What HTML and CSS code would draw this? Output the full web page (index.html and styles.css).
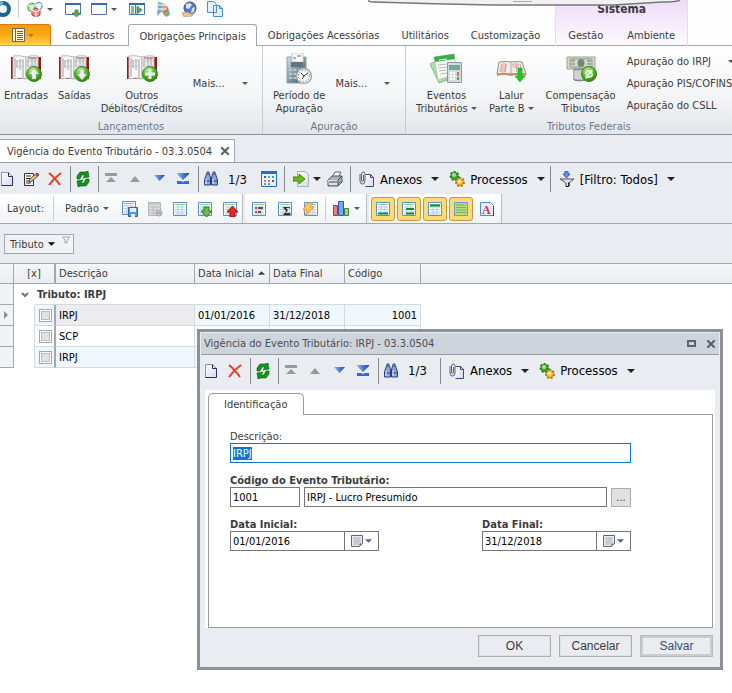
FILE: index.html
```html
<!DOCTYPE html>
<html lang="pt-BR">
<head>
  <meta charset="UTF-8">
  <title>Vigência do Evento Tributário</title>
  <link rel="stylesheet" href="styles.css">
</head>
<body>
  <!-- icon sprite -->
  <svg class="sprite" width="0" height="0">
    <defs>
      <linearGradient id="gBlue" x1="0" y1="0" x2="1" y2="0"><stop offset="0" stop-color="#8db4f5"/><stop offset="1" stop-color="#1a40b8"/></linearGradient>
      <linearGradient id="gPage" x1="0" y1="0" x2="1" y2="1"><stop offset="0" stop-color="#fff"/><stop offset="1" stop-color="#d3dbe9"/></linearGradient>
      <radialGradient id="gGreen" cx=".4" cy=".25" r=".8"><stop offset="0" stop-color="#c2efa0"/><stop offset=".5" stop-color="#55b72c"/><stop offset="1" stop-color="#237c0c"/></radialGradient>
      <linearGradient id="gCalc" x1="0" y1="0" x2="1" y2="1"><stop offset="0" stop-color="#c9e0ec"/><stop offset="1" stop-color="#3c4b58"/></linearGradient>
    </defs>
    <symbol id="new" viewBox="0 0 16 16"><path d="M2.500 1.500h7l4 4v9h-11z" fill="url(#gPage)" stroke="#8a94b4"/><path d="M9.500 1.500v4h4v9h-11" fill="none" stroke="#2c3058"/></symbol>
    <symbol id="edit" viewBox="0 0 16 16"><path d="M1.500 2.500h9v12h-9z" fill="#fff" stroke="#333"/><path d="M3 5h5M3 7.500h4M3 10h3M3 12h5" stroke="#222"/><path d="M6 11l1-3 7-6 2 2-7 6z" fill="#e8c38c" stroke="#6b4a38"/><path d="M13 3l2 2" stroke="#c33" stroke-width="2"/></symbol>
    <symbol id="delete" viewBox="0 0 16 16"><path d="M2 2q5 4 11 12M14 2Q7 7 2 14" fill="none" stroke="#ef3a1d" stroke-width="2"/></symbol>
    <symbol id="refresh" viewBox="0 0 16 16"><path d="M2 8V5l3-4h5l3-1 1 6-6 1 2-3H7L5 8z" fill="#12941d" stroke="#06600c" stroke-width=".6"/><path d="M14 8v3l-3 4H6l-3 1-1-6 6-1-2 3h3l2-4z" fill="#12941d" stroke="#06600c" stroke-width=".6"/></symbol>
    <symbol id="first" viewBox="0 0 16 16"><path d="M2 2h12v3H2zM8 6l5 5H3z" fill="#999"/></symbol>
    <symbol id="prev" viewBox="0 0 16 16"><path d="M8 5l5 6H3z" fill="#999"/></symbol>
    <symbol id="next" viewBox="0 0 16 16"><path d="M3 4h11L8.500 10z" fill="url(#gBlue)"/></symbol>
    <symbol id="last" viewBox="0 0 16 16"><path d="M2 2h12v1L8 9 2 3z" fill="url(#gBlue)"/><path d="M2 10h4l2 1 2-1h4v3H2z" fill="#3767cf"/></symbol>
    <symbol id="find" viewBox="0 0 16 16"><path d="M3.500 3h3l1 4v7h-6V9zM9.500 3h3l2 6v5h-6V7z" fill="#8fa6d6" stroke="#263f80"/><path d="M4 3V1h2v2M10 3V1h2v2M7 7h2M2 10h5M9 10h5" stroke="#263f80" fill="none"/><path d="M3 8v5M10 8v5" stroke="#eef4ff"/></symbol>
    <symbol id="calendar" viewBox="0 0 16 16"><path d="M.5.5h15v15H.5z" fill="#e8f2ff" stroke="#1f6fd6"/><path d="M0 0h16v3H0z" fill="#1f6fd6"/><path d="M3 5h2v2H3zM11 9h2v2h-2z" fill="#556"/><path d="M7 5h2v2H7zM3 9h2v2H3z" fill="#5aa5dd"/><path d="M11 5h2v2h-2zM7 12h2v2H7z" fill="#45b56f"/><path d="M7 9h2v2H7zM3 12h2v2H3z" fill="#e56a3c"/></symbol>
    <symbol id="export" viewBox="0 0 16 16"><path d="M4.500.5h8l3 3v12h-11z" fill="url(#gPage)" stroke="#aab2b8"/><path d="M0 6h6V3l6 5-6 5v-3H0z" fill="#6cb91a" stroke="#3e850a"/></symbol>
    <symbol id="print" viewBox="0 0 16 16"><path d="M5 6l3-5h6l-3 6z" fill="#fff" stroke="#667"/><path d="M1 9l4-4h10v6l-4 4H1z" fill="#aab4b9" stroke="#4f5c62"/><path d="M1 9h10v5H2z" fill="#dce3e5"/><path d="M2 11h8" stroke="#444"/><path d="M11 9l4-4M11 9v6" stroke="#445"/><path d="M12 11l2-2v2l-2 2z" fill="#3cc35c"/></symbol>
    <symbol id="clip" viewBox="0 0 16 16"><path d="M6.500 3.500h5l3 3v9h-8" fill="url(#gPage)" stroke="#50408a"/><path d="M11.500 3.500v3h3" fill="none" stroke="#50408a"/><path d="M1 3v7q0 3 2.500 3T6 10V3Q6 1 4.300 1T2.500 3v6q0 1.500 1 1.500T4.500 9V4" fill="none" stroke="#526675"/></symbol>
    <symbol id="gears" viewBox="0 0 16 16"><circle cx="5.500" cy="5" r="4" fill="#3da52e" stroke="#27812a" stroke-width="2" stroke-dasharray="2 1.500"/><circle cx="5" cy="4" r="2" fill="#a9e48b"/><circle cx="11" cy="11" r="4" fill="#f0b62c" stroke="#b9700f" stroke-width="2" stroke-dasharray="2 1.500"/><circle cx="10.500" cy="10.500" r="2" fill="#fde9a6"/></symbol>
    <symbol id="funnel" viewBox="0 0 16 16"><path d="M1 8h14l-5 4v3l-3 1v-4z" fill="#dce1e3" stroke="#555"/><path d="M9 12h1v3l-3 1" fill="none" stroke="#000"/><path d="M6 0h3v3h2L7.500 7 4 3h2z" fill="#5c93ee" stroke="#2f5fc6"/></symbol>
    <symbol id="sheet" viewBox="0 0 16 16"><path d="M1.500 1.500h13v13h-13z" fill="#fafdff" stroke="#5b8fd0"/><path d="M3 3.500h10" stroke="#9bc98c"/><path d="M3 6h10M3 8.500h10M3 11h10M3 13h10M6 5v9M10 5v9" stroke="#b6cde6"/></symbol>
    <symbol id="sheetSave" viewBox="0 0 16 16"><use href="#sheet" x="-1" y="-1"/><path d="M6.500 6.500h9v9h-9z" fill="#5b95dd" stroke="#2b65ae"/><path d="M8 7h6v4H8zM9 13h4v3H9z" fill="#e2efff"/></symbol>
    <symbol id="sheetOff" viewBox="0 0 16 16"><path d="M1.500 1.500h12v13h-12z" fill="#ddd" stroke="#b4b4b4"/><path d="M2 3h12M2 6h12M2 9h9M2 12h9M6 5v9" stroke="#bbb"/><circle cx="12" cy="12" r="3" fill="#ccc" stroke="#a5a5a5"/><path d="M10 12h4" stroke="#888"/></symbol>
    <symbol id="sheetDown" viewBox="0 0 16 16"><use href="#sheet"/><path d="M7 6h5v4h3l-5.500 6L4 10h3z" fill="#6dbd4a" stroke="#287d13"/></symbol>
    <symbol id="sheetUp" viewBox="0 0 16 16"><use href="#sheet"/><path d="M8 16h5v-5h3l-5.500-6L5 11h3z" fill="#df2921" stroke="#ad1111"/></symbol>
    <symbol id="sheetRows" viewBox="0 0 16 16"><use href="#sheet"/><path d="M4 7h2M4 11h2" stroke="#d11" stroke-width="1.500"/><path d="M7 7h5M7 11h3" stroke="#223" stroke-width="1.500"/></symbol>
    <symbol id="sheetFlash" viewBox="0 0 16 16"><use href="#sheet"/><path d="M4 2h6L7 6h4L2 15l2-6H0z" fill="#f8c95c" stroke="#dba045"/></symbol>
    <symbol id="chart" viewBox="0 0 16 16"><path d="M.5 4.500h4v10h-4z" fill="#f08080" stroke="#c02e2e"/><path d="M5.500.5h5v14h-5z" fill="#77a7ef" stroke="#2759ad"/><path d="M11.500 7.500h4v7h-4z" fill="#98d095" stroke="#3b863b"/></symbol>
    <symbol id="sheetFoot" viewBox="0 0 16 16"><use href="#sheet"/><path d="M3 12.500h10" stroke="#098f37" stroke-width="2"/></symbol>
    <symbol id="sheetGroup" viewBox="0 0 16 16"><use href="#sheet"/><path d="M5 8h8M5 12.500h8" stroke="#098f37" stroke-width="2"/></symbol>
    <symbol id="sheetHead" viewBox="0 0 16 16"><use href="#sheet"/><path d="M3 4.500h10" stroke="#098f37" stroke-width="2"/></symbol>
    <symbol id="sheetFull" viewBox="0 0 16 16"><path d="M1.500 1.500h13v13h-13z" fill="#b6d987" stroke="#6b9bd0"/><path d="M3 4h10M3 6.500h10M3 9h10M3 11.500h10" stroke="#7fb44c"/></symbol>
    <symbol id="page" viewBox="0 0 16 16"><path d="M1.500 1.500h10l3 3v10h-13z" fill="#e1f0fc" stroke="#5488bf"/><path d="M14.500 5v10" stroke="#1b4f7c"/></symbol>
    <symbol id="book" viewBox="0 0 32 28"><path d="M1 2h30v22H1z" fill="#9b1616"/><path d="M3 1q7-1 13 1v22q-6-2-13 0z" fill="#f8f8f8" stroke="#b9b9b9"/><path d="M16 2q6-2 12-1v22q-6-1-12 1z" fill="#f1f1f1" stroke="#b9b9b9"/><path d="M5 3v19M7 5v8M10 4v11M13 4v19M18 4v8M22 3v17M25 3v7" stroke="#9c9cab"/><path d="M5 6h8M5 11h8M18 6h9M18 11h9" stroke="#c1c1cb"/><path d="M18 3h9" stroke="#b84747"/></symbol>
    <symbol id="bookUp" viewBox="0 0 32 28"><use href="#book"/><circle cx="24" cy="19" r="7.500" fill="url(#gGreen)" stroke="#388a1b"/><path d="M24 13l5 6h-3v5h-4v-5h-3z" fill="#eee" stroke="#aaa" stroke-width=".5"/></symbol>
    <symbol id="bookDown" viewBox="0 0 32 28"><use href="#book"/><circle cx="24" cy="19" r="7.500" fill="url(#gGreen)" stroke="#388a1b"/><path d="M24 25l5-6h-3v-5h-4v5h-3z" fill="#eee" stroke="#aaa" stroke-width=".5"/></symbol>
    <symbol id="bookAdd" viewBox="0 0 32 28"><use href="#book"/><circle cx="24" cy="19" r="7.500" fill="url(#gGreen)" stroke="#388a1b"/><path d="M22.500 14h3v3.500H29v3h-3.500V24h-3v-3.500H19v-3h3.500z" fill="#eee"/></symbol>
    <symbol id="period" viewBox="0 0 32 32"><path d="M4 4h19v26H4z" fill="url(#gCalc)" stroke="#8aa2b0"/><path d="M9 0h11v9H9z" fill="#fafafa" stroke="#ccc"/><path d="M10 5h3M14 3h4" stroke="#667"/><path d="M8 9h12v5H8z" fill="#5e7681"/><path d="M6 17h15M6 21h15M6 25h15" stroke="#b9cad3" stroke-width="2" stroke-dasharray="3 1.500"/><circle cx="21" cy="23" r="7.500" fill="#f8f8f6" stroke="#aaa" stroke-width="1.500"/><path d="M18 20l3 3 4-3M19 26l2-3" fill="none" stroke="#333"/><circle cx="21" cy="23" r="5.500" fill="none" stroke="#555" stroke-dasharray="1 1.900"/></symbol>
    <symbol id="events" viewBox="0 0 32 32"><path d="M0 11l9-4 8 20-8 3z" fill="#a8dfa5" stroke="#7ec37d"/><path d="M4 4l20-3 3 20-19 6z" fill="#fafafa" stroke="#b9c8b9"/><path d="M4 4l20-3 1 5L5 9z" fill="#38ad48"/><path d="M9 7l8-1" stroke="#fff"/><path d="M8 12l9-1M8 15l9-1M9 18l7-1M10 21l7-1" stroke="#bbb"/><path d="M17.500 9.500h14v20h-14z" fill="#d5dadd" stroke="#8d999f"/><path d="M19 12h11v5H19z" fill="#6cac98"/><path d="M20 20h6M20 23h6M20 26h6" stroke="#fff" stroke-width="2" stroke-dasharray="2 1"/><path d="M28 19v4" stroke="#e06a53" stroke-width="2"/><path d="M28 24v3" stroke="#4aa563" stroke-width="2"/></symbol>
    <symbol id="lalur" viewBox="0 0 32 28"><path d="M4 7q6-1 12 0 5-1 11 0l4 12q-8-1-15 0-7-1-14 0z" fill="#f1eee9" stroke="#9d8a72"/><path d="M2 20q7-2 14 0 7-2 15 0" fill="none" stroke="#bb975e" stroke-width="2"/><path d="M16 7v12M7 10l-2 7M11 9l-1 8M21 9l1 8M25 9l2 8" stroke="#aaa"/><path d="M7 9h4v3H7zM18 9h5v3h-5zM7 14h3v3H7z" fill="none" stroke="#e79a9a"/><path d="M23 13h4v8h3l-5 6-5-6h3z" fill="#20cb1d" stroke="#148f15" stroke-width=".5"/></symbol>
    <symbol id="money" viewBox="0 0 32 28"><path d="M2 2h28v12H2z" fill="#dcd9ca" stroke="#9fa092"/><path d="M5 4h22v8H5z" fill="none" stroke="#899b85"/><ellipse cx="16" cy="8" rx="3.500" ry="4" fill="#6c8a77"/><path d="M6 6h4M6 9h4M22 6h4M22 9h4" stroke="#677"/><path d="M9 14h11v11q-6 2-11 0z" fill="#b9b9b9" stroke="#777"/><path d="M9 17h11M9 19h11M9 21h11M9 23h11" stroke="#eee"/><circle cx="24" cy="19" r="7.500" fill="url(#gGreen)" stroke="#388a1b"/><path d="M19.500 19q1-4.500 6-4l2-1v5h-5l1.500-2q-2 0-2.500 2zM28.500 19q-1 4.500-6 4l-2 1v-5h5L24 21q2 0 2.500-2z" fill="#dff5d0"/></symbol>
    <symbol id="cubes" viewBox="0 0 16 16"><path d="M1 4l4-2 4 2v5l-4 2-4-2z" fill="#bae6a8" stroke="#459e4c"/><path d="M8 3l4-2 3 2v4l-3 2-4-2z" fill="#d6edf7" stroke="#448db3"/><path d="M5 9l4-2 4 2v5l-4 2-4-2z" fill="#ef8c81" stroke="#ca3530"/><path d="M1 4l4 2 4-2M5 6v5M8 3l4 2 3-2M12 5v4M5 9l4 2 4-2M9 11v5" fill="none" stroke="#fff"/></symbol>
    <symbol id="window" viewBox="0 0 16 16"><path d="M.5 2.500h15v11H.5z" fill="#fbfcfe" stroke="#5274a5"/><path d="M0 2h16v2H0z" fill="#306ab8"/></symbol>
    <symbol id="windowDown" viewBox="0 0 16 16"><use href="#window"/><path d="M10 9h3v3h3l-4.500 4L7 12h3z" fill="#59a656" stroke="#38783a" stroke-width=".7"/></symbol>
    <symbol id="windowGo" viewBox="0 0 16 16"><use href="#window"/><path d="M2 5h3v8H2z" fill="#7cc482"/><path d="M6.500 4v9" stroke="#5274a5"/><path d="M8 5l5 4-5 4z" fill="#4fae59" stroke="#2b7c37" stroke-width=".7"/></symbol>
    <symbol id="palette" viewBox="0 0 16 16"><path d="M2 15L3 1l5 1-2 9z" fill="#64ade2"/><path d="M6 11l2-9 4 3-4 7z" fill="#f0a23d"/><path d="M8 12l4-7 2 4-5 5z" fill="#b862c4"/><path d="M9 14l5-5 1 5-4 2z" fill="#72bb50"/><path d="M3 4h8M2 8h10" stroke="#fff"/></symbol>
    <symbol id="globe" viewBox="0 0 16 16"><circle cx="9" cy="7" r="6" fill="#5279bf" stroke="#334f89"/><path d="M5 3l4-1 2 2-3 4-3-1zM11 7l3-1-1 5-3 1z" fill="#d8e4f1"/><path d="M1 12l5-1 5 2 4-3-4 5-8 1z" fill="#edc398" stroke="#a57e5b" stroke-width=".5"/></symbol>
    <symbol id="copy" viewBox="0 0 16 16"><path d="M.5.5h6l3 3v8h-9zM6.500 4.500h6l3 3v8h-9z" fill="#e4f0fd" stroke="#4c8bd0"/><path d="M12.500 4.500v3h3" fill="none" stroke="#4c8bd0"/></symbol>
    <symbol id="caret" viewBox="0 0 8 4"><path d="M0 0h8L4 4z" fill="currentColor"/></symbol>
    <symbol id="close" viewBox="0 0 8 8"><path d="M0 0l8 8M8 0L0 8" stroke="currentColor" stroke-width="2"/></symbol>
    <symbol id="notes" viewBox="0 0 12 12"><path d="M.5.5h11v8l-3 3h-8z" fill="#e9edf2" stroke="#6d6260"/><path d="M2 3h8M2 5h8M2 7h8M2 9h6M4 2v8M6 2v8M8 2v8" stroke="#b6bfce"/><path d="M9 11V9h2" fill="#aaa" stroke="#6d6260"/></symbol>
  </svg>

  <!-- ribbon -->
  <header class="ribbon-top">
    <div class="ribbon-left">
      <div class="quick">
        <svg class="logo" viewBox="0 0 16 16"><circle cx="8" cy="8" r="6" fill="#f3f9fc" stroke="#1a688c" stroke-width="4"/><path d="M2 8a6 6 0 0 1 6-6" fill="none" stroke="#6fb8d4" stroke-width="3"/></svg>
        <span class="line"></span>
        <button class="q-drop" aria-label="Módulos"><svg class="icon"><use href="#cubes"/></svg><svg class="caret"><use href="#caret"/></svg></button>
        <button aria-label="Abrir janela"><svg class="icon"><use href="#windowDown"/></svg></button>
        <button class="q-drop" aria-label="Janelas"><svg class="icon"><use href="#window"/></svg><svg class="caret"><use href="#caret"/></svg></button>
        <button aria-label="Avançar"><svg class="icon"><use href="#windowGo"/></svg></button>
        <button aria-label="Cores"><svg class="icon"><use href="#palette"/></svg></button>
        <button aria-label="Internet"><svg class="icon"><use href="#globe"/></svg></button>
        <button aria-label="Copiar"><svg class="icon"><use href="#copy"/></svg></button>
      </div>
      <nav class="tabs">
        <button class="app-button" aria-label="Menu">
          <svg class="app-icon" viewBox="0 0 13 14"><path d="M.5.5h12v13H.5z" fill="#fff3c8" stroke="#6b6558"/><path d="M3.500 1v13M5 3.500h6M5 5.500h6M5 7.500h6M5 9.500h6M5 11.500h6" stroke="#6b6558"/></svg>
          <svg class="caret"><use href="#caret"/></svg>
        </button>
        <button class="tab">Cadastros</button>
        <button class="tab active">Obrigações Principais</button>
        <button class="tab">Obrigações Acessórias</button>
        <button class="tab">Utilitários</button>
        <button class="tab">Customização</button>
      </nav>
    </div>
    <div class="context">
      <div class="context-title">Sistema</div>
      <nav class="tabs">
        <button class="tab">Gestão</button>
        <button class="tab">Ambiente</button>
      </nav>
    </div>
    <div class="handle"><svg viewBox="0 0 312 7" preserveAspectRatio="none"><path d="M0 0q0 2 6 2 60 2 120 3h120l48-3q16 0 18-2z" fill="#f1f1f1"/><path d="M0 0q0 2 6 2 60 2 120 3h120l48-3q16 0 18-2" fill="none" stroke="#777" stroke-width="1.500"/><path d="M145 1.500h19" stroke="#aaa"/></svg></div>
  </header>

  <div class="ribbon">
    <section class="group g-entries">
      <div class="items">
        <button class="big"><svg><use href="#bookUp"/></svg>Entradas</button>
        <button class="big"><svg><use href="#bookDown"/></svg>Saídas</button>
        <button class="big"><svg><use href="#bookAdd"/></svg>Outros<br>Débitos/Créditos</button>
        <button class="more">Mais... <svg class="caret"><use href="#caret"/></svg></button>
      </div>
      <div class="caption">Lançamentos</div>
    </section>
    <section class="group g-closing">
      <div class="items">
        <button class="big"><svg><use href="#period"/></svg>Período de<br>Apuração</button>
        <button class="more">Mais... <svg class="caret"><use href="#caret"/></svg></button>
      </div>
      <div class="caption">Apuração</div>
    </section>
    <section class="group g-taxes">
      <div class="items">
        <button class="big"><svg><use href="#events"/></svg>Eventos<br>Tributários <svg class="caret"><use href="#caret"/></svg></button>
        <button class="big"><svg><use href="#lalur"/></svg>Lalur<br>Parte B <svg class="caret"><use href="#caret"/></svg></button>
        <button class="big"><svg><use href="#money"/></svg>Compensação<br>Tributos</button>
        <div class="stack">
          <button>Apuração do IRPJ <svg class="caret"><use href="#caret"/></svg></button>
          <button>Apuração PIS/COFINS</button>
          <button>Apuração do CSLL <svg class="caret"><use href="#caret"/></svg></button>
        </div>
      </div>
      <div class="caption">Tributos Federais</div>
    </section>
  </div>

  <div class="doc-tabs">
    <div class="doc-tab">Vigência do Evento Tributário - 03.3.0504 <button aria-label="Fechar"><svg><use href="#close"/></svg></button></div>
  </div>

  <div class="toolbar main-toolbar">
    <button class="tool" aria-label="Novo"><svg class="icon"><use href="#new"/></svg></button>
    <button class="tool" aria-label="Editar"><svg class="icon"><use href="#edit"/></svg></button>
    <button class="tool" aria-label="Excluir"><svg class="icon"><use href="#delete"/></svg></button>
    <span class="sep"></span>
    <button class="tool" aria-label="Atualizar"><svg class="icon"><use href="#refresh"/></svg></button>
    <span class="sep"></span>
    <button class="tool" aria-label="Primeiro"><svg class="icon"><use href="#first"/></svg></button>
    <button class="tool" aria-label="Anterior"><svg class="icon"><use href="#prev"/></svg></button>
    <button class="tool" aria-label="Próximo"><svg class="icon"><use href="#next"/></svg></button>
    <button class="tool" aria-label="Último"><svg class="icon"><use href="#last"/></svg></button>
    <span class="sep"></span>
    <button class="tool" aria-label="Localizar"><svg class="icon"><use href="#find"/></svg></button>
    <span class="count">1/3</span>
    <button class="tool" aria-label="Calendário"><svg class="icon"><use href="#calendar"/></svg></button>
    <span class="sep"></span>
    <button class="text-tool" aria-label="Exportar"><svg class="icon"><use href="#export"/></svg><svg class="caret"><use href="#caret"/></svg></button>
    <button class="tool" aria-label="Imprimir"><svg class="icon"><use href="#print"/></svg></button>
    <span class="sep"></span>
    <button class="text-tool"><svg class="icon"><use href="#clip"/></svg><span>Anexos</span><svg class="caret"><use href="#caret"/></svg></button>
    <button class="text-tool"><svg class="icon"><use href="#gears"/></svg><span>Processos</span><svg class="caret"><use href="#caret"/></svg></button>
    <span class="sep"></span>
    <button class="text-tool"><svg class="icon"><use href="#funnel"/></svg><span>[Filtro: Todos]</span><svg class="caret"><use href="#caret"/></svg></button>
  </div>

  <div class="layout-bar">
    <div class="band">
      <span class="layout-label">Layout:</span>
      <button class="layout-select">Padrão <svg class="caret"><use href="#caret"/></svg></button>
      <button class="tool" aria-label="Salvar layout"><svg class="icon"><use href="#sheetSave"/></svg></button>
      <button class="tool" aria-label="Excluir layout" disabled><svg class="icon"><use href="#sheetOff"/></svg></button>
      <button class="tool" aria-label="Colunas"><svg class="icon"><use href="#sheet"/></svg></button>
      <button class="tool" aria-label="Importar layout"><svg class="icon"><use href="#sheetDown"/></svg></button>
      <button class="tool" aria-label="Exportar layout"><svg class="icon"><use href="#sheetUp"/></svg></button>
    </div>
    <div class="band wide">
      <button class="tool" aria-label="Formatação"><svg class="icon"><use href="#sheetRows"/></svg></button>
      <button class="tool" aria-label="Totais"><svg class="icon"><use href="#sheet"/><text x="6" y="14" class="glyph-sum">Σ</text></svg></button>
      <button class="tool" aria-label="Ajuste rápido"><svg class="icon"><use href="#sheetFlash"/></svg></button>
      <button class="chart-tool" aria-label="Gráfico"><svg class="icon"><use href="#chart"/></svg><svg class="caret"><use href="#caret"/></svg></button>
    </div>
    <div class="band wide">
      <button class="tool on" aria-label="Rodapé"><svg class="icon"><use href="#sheetFoot"/></svg></button>
      <button class="tool on" aria-label="Rodapé do grupo"><svg class="icon"><use href="#sheetGroup"/></svg></button>
      <button class="tool on" aria-label="Painel de grupo"><svg class="icon"><use href="#sheetHead"/></svg></button>
      <button class="tool on" aria-label="Linhas alternadas"><svg class="icon"><use href="#sheetFull"/></svg></button>
      <button class="tool" aria-label="Fonte"><svg class="icon"><use href="#page"/><text x="3" y="13" class="glyph-a">A</text></svg></button>
    </div>
  </div>

  <div class="group-panel">
    <button class="group-field">Tributo <svg class="caret"><use href="#caret"/></svg><svg class="pin" viewBox="0 0 8 8"><path d="M.5 1h7L5 4v3H3V4z" fill="#fff" stroke="#9da5af"/></svg></button>
  </div>

  <table class="grid">
    <colgroup>
      <col class="c-ind"><col class="c-box"><col class="c-box"><col class="c-desc">
      <col class="c-date"><col class="c-date"><col class="c-code"><col>
    </colgroup>
    <thead>
      <tr>
        <th></th>
        <th colspan="2" class="mark">[x]</th>
        <th>Descrição</th>
        <th>Data Inicial <svg class="sort"><use href="#caret"/></svg></th>
        <th>Data Final</th>
        <th>Código</th>
        <th></th>
      </tr>
    </thead>
    <tbody>
      <tr class="group-row">
        <td class="ind"></td>
        <td colspan="7"><svg class="chevron" viewBox="0 0 8 6"><path d="M1 1l3 3 3-3" fill="none" stroke="#777" stroke-width="2"/></svg>Tributo: IRPJ</td>
      </tr>
      <tr class="odd">
        <td class="ind"><svg viewBox="0 0 4 8"><path d="M0 0l4 4-4 4z" fill="#8a9099"/></svg></td>
        <td></td>
        <td class="check"><input type="checkbox" aria-label="Selecionar IRPJ 1"></td>
        <td class="focus">IRPJ</td>
        <td>01/01/2016</td>
        <td>31/12/2018</td>
        <td class="num">1001</td>
        <td></td>
      </tr>
      <tr>
        <td class="ind"></td>
        <td></td>
        <td class="check"><input type="checkbox" aria-label="Selecionar SCP"></td>
        <td>SCP</td>
        <td></td>
        <td></td>
        <td></td>
        <td></td>
      </tr>
      <tr class="odd">
        <td class="ind"></td>
        <td></td>
        <td class="check"><input type="checkbox" aria-label="Selecionar IRPJ 2"></td>
        <td>IRPJ</td>
        <td></td>
        <td></td>
        <td></td>
        <td></td>
      </tr>
    </tbody>
  </table>

  <!-- floating record window -->
  <div class="dialog" role="dialog" aria-labelledby="dialogTitle">
    <div class="dialog-title">
      <span id="dialogTitle">Vigência do Evento Tributário: IRPJ - 03.3.0504</span>
      <button class="maximize" aria-label="Maximizar"></button>
      <button aria-label="Fechar"><svg><use href="#close"/></svg></button>
    </div>
    <div class="toolbar dialog-toolbar">
      <button class="tool" aria-label="Novo"><svg class="icon"><use href="#new"/></svg></button>
      <button class="tool" aria-label="Excluir"><svg class="icon"><use href="#delete"/></svg></button>
      <span class="sep"></span>
      <button class="tool" aria-label="Atualizar"><svg class="icon"><use href="#refresh"/></svg></button>
      <span class="sep"></span>
      <button class="tool" aria-label="Primeiro"><svg class="icon"><use href="#first"/></svg></button>
      <button class="tool" aria-label="Anterior"><svg class="icon"><use href="#prev"/></svg></button>
      <button class="tool" aria-label="Próximo"><svg class="icon"><use href="#next"/></svg></button>
      <button class="tool" aria-label="Último"><svg class="icon"><use href="#last"/></svg></button>
      <span class="sep"></span>
      <button class="tool" aria-label="Localizar"><svg class="icon"><use href="#find"/></svg></button>
      <span class="count">1/3</span>
      <span class="sep"></span>
      <button class="text-tool"><svg class="icon"><use href="#clip"/></svg><span>Anexos</span><svg class="caret"><use href="#caret"/></svg></button>
      <button class="text-tool"><svg class="icon"><use href="#gears"/></svg><span>Processos</span><svg class="caret"><use href="#caret"/></svg></button>
    </div>
    <div class="dialog-body">
      <button class="page-tab">Identificação</button>
      <form class="page">
        <div class="field">
          <label for="descricao" class="optional">Descrição:</label>
          <div class="desc-box"><input type="text" id="descricao" value="IRPJ"></div>
        </div>
        <div class="field">
          <label for="codigo">Código do Evento Tributário:</label>
          <div class="lookup">
            <input type="text" id="codigo" class="code" value="1001">
            <input type="text" aria-label="Evento" value="IRPJ - Lucro Presumido">
            <button type="button" class="browse">...</button>
          </div>
        </div>
        <div class="dates">
          <div class="field">
            <label for="dataInicial">Data Inicial:</label>
            <div class="date"><input type="text" id="dataInicial" value="01/01/2016"><button type="button" aria-label="Abrir calendário"><svg class="notes"><use href="#notes"/></svg><svg class="caret"><use href="#caret"/></svg></button></div>
          </div>
          <div class="field">
            <label for="dataFinal">Data Final:</label>
            <div class="date"><input type="text" id="dataFinal" value="31/12/2018"><button type="button" aria-label="Abrir calendário"><svg class="notes"><use href="#notes"/></svg><svg class="caret"><use href="#caret"/></svg></button></div>
          </div>
        </div>
      </form>
    </div>
    <div class="dialog-actions">
      <button>OK</button>
      <button>Cancelar</button>
      <button class="primary">Salvar</button>
    </div>
  </div>

  <script>
    // the description is edited first, with its value selected
    const descricao = document.getElementById("descricao");
    descricao.focus();
    descricao.select();
  </script>
</body>
</html>
```
FILE: styles.css
```css
:root {
  --bar: #e9ecf1;
  --line: #a2a8b3;
  --text: #3b3b3b;
}

* {
  box-sizing: border-box;
}

body {
  margin: 0;
  min-height: 100vh;
  overflow: hidden;
  position: relative;
  background: #fff;
  color: var(--text);
  font: 11px/13px "DejaVu Sans Condensed", "DejaVu Sans", sans-serif;
}

button,
input {
  font: inherit;
  color: inherit;
}

button {
  padding: 0;
  border: 0;
  background: none;
  white-space: nowrap;
}

svg {
  flex: none;
}

.sprite {
  position: absolute;
}

.icon {
  width: 16px;
  height: 16px;
  display: block;
}

.caret {
  width: 6px;
  height: 3px;
  color: #555;
}

.glyph-sum {
  font: bold 12px "Liberation Serif", serif;
  fill: #222;
}

.glyph-a {
  font: bold 12px "Liberation Serif", serif;
  fill: #d63131;
}

/* ribbon tabs */
.ribbon-top {
  position: relative;
  display: flex;
  gap: 4px;
  height: 46px;
  overflow: hidden;
  background: #fdfdfd;
  box-shadow: inset 0 -1px var(--line);
}

.ribbon-left {
  flex: none;
}

.quick {
  height: 24px;
  display: flex;
  align-items: center;
  padding-bottom: 6px;
}

.quick button {
  display: flex;
  align-items: center;
  gap: 4px;
  margin-right: 10px;
}

.quick .q-drop {
  margin-right: 12px;
}

.logo {
  width: 16px;
  height: 16px;
  margin-left: -5px;
}

.line {
  width: 1px;
  height: 18px;
  background: #c5c8cc;
  margin: 0 8px 0 7px;
}

.tabs {
  display: flex;
  height: 22px;
}

.tab {
  padding: 2px 11px 0;
  border-bottom: 1px solid var(--line);
}

.tab.active {
  margin-left: 3px;
  padding: 1px 10px 0;
  border: 1px solid var(--line);
  border-bottom: 0;
  border-radius: 3px 3px 0 0;
  background: #fff;
}

.app-button {
  width: 51px;
  margin-right: 3px;
  display: flex;
  align-items: center;
  justify-content: center;
  gap: 3px;
  padding-right: 4px;
  border: 1px solid #d97a10;
  border-left: 0;
  border-bottom-color: var(--line);
  border-radius: 0 3px 0 0;
  background: linear-gradient(#f29a13, #fba90f 50%, #ffd34f);
}

.app-icon {
  width: 13px;
  height: 14px;
}

.app-button .caret {
  color: #a3783d;
}

.context {
  flex: none;
  border: 1px solid #ead9f3;
  border-width: 0 1px;
  background: linear-gradient(#efdcf9, #fdfbfe);
}

.context .tab {
  padding: 2px 12px 0;
}

.context-title {
  height: 24px;
  padding-top: 3px;
  text-align: center;
  font-size: 12px;
  font-weight: bold;
}

.handle {
  position: absolute;
  top: 0;
  left: 368px;
}

.handle svg {
  display: block;
  width: 312px;
  height: 7px;
}

/* ribbon groups */
.ribbon {
  display: flex;
  height: 89px;
  overflow: hidden;
  border-bottom: 1px solid #8b9097;
  background: linear-gradient(#fff, #f2f4f6 60%, #e2e6eb);
}

.group {
  flex: none;
  display: flex;
  flex-direction: column;
  border-right: 1px solid #c9cdd3;
}

.g-entries {
  width: 263px;
}

.g-closing {
  width: 143px;
}

.g-taxes {
  flex: 1 0 364px;
}

.items {
  display: flex;
  gap: 2px;
  height: 74px;
}

.g-closing .items {
  padding-left: 6px;
}

.g-taxes .items {
  gap: 4px;
  padding-left: 6px;
}

.big {
  flex: none;
  padding: 7px 4px 0;
  text-align: center;
  display: block;
  line-height: 13px;
  align-self: flex-start;
}

.big > svg:first-child {
  display: block;
  width: 32px;
  height: 32px;
  margin: 0 auto 4px;
}

.big .caret,
.stack .caret {
  vertical-align: 2px;
}

.more {
  display: flex;
  align-items: center;
  gap: 17px;
  align-self: flex-start;
  height: 74px;
  padding-left: 4px;
}

.stack button {
  display: flex;
  align-items: center;
  gap: 17px;
  height: 22px;
}

.stack {
  padding: 4px 0 0 3px;
}

.caption {
  text-align: center;
  color: #707889;
}

.g-taxes .caption {
  text-align: left;
  padding-left: 141px;
}

/* document tab */
.doc-tabs {
  height: 28px;
  padding-top: 4px;
  background: var(--bar);
  border-bottom: 1px solid #989da8;
}

.doc-tab {
  display: inline-flex;
  align-items: center;
  gap: 9px;
  height: 23px;
  padding: 0 5px 0 7px;
  border: 1px solid var(--line);
  border-width: 1px 1px 0 0;
  background: #fff;
}

.doc-tab svg,
.dialog-title svg {
  display: block;
  width: 8px;
  height: 8px;
  color: #5a5e66;
}

/* toolbars */
.toolbar {
  display: flex;
  align-items: center;
  height: 31px;
  overflow: hidden;
  background: var(--bar);
  color: #000;
  font-size: 13px;
}

.main-toolbar {
  padding-top: 1px;
}

.main-toolbar > :first-child {
  margin-left: -5px;
}

.dialog-toolbar > :first-child {
  margin-left: -2px;
}

.tool {
  flex: none;
  width: 24px;
  height: 24px;
  display: flex;
  align-items: center;
  justify-content: center;
}

.sep {
  flex: none;
  width: 1px;
  height: 26px;
  margin-left: 3px;
  background: #85888e;
}

.count {
  width: 34px;
  padding-left: 5px;
}

.text-tool {
  display: flex;
  align-items: center;
  height: 24px;
  padding: 0 2px 0 8px;
}

.text-tool span {
  padding: 0 5px;
}

.toolbar .caret {
  width: 8px;
  height: 4px;
  margin-left: 4px;
  color: #222;
}

/* layout toolbar */
.layout-bar {
  display: flex;
  gap: 2px;
  height: 30px;
  background: var(--bar);
  border-bottom: 1px solid var(--line);
}

.band {
  display: flex;
  align-items: center;
  gap: 1px;
  background: linear-gradient(#fff, #f0f2f5);
  border-right: 1px solid #b7bcc5;
}

.band.wide {
  gap: 2px;
  padding: 0 2px;
}

.layout-label {
  padding: 6px 9px 6px 7px;
  border-right: 1px solid #ccd0d5;
}

.layout-select {
  display: flex;
  align-items: center;
  gap: 4px;
  padding: 0 8px 0 10px;
}

.chart-tool {
  display: flex;
  align-items: center;
  gap: 5px;
  height: 24px;
  padding: 0 4px 0 7px;
  border-left: 1px solid #ccd0d5;
}

.tool.on {
  border: 1px solid #c19a43;
  border-radius: 3px;
  background: #ffdb77;
}

/* grouping field */
.group-panel {
  height: 39px;
  padding: 10px 4px;
  background: var(--bar);
}

.group-field {
  display: flex;
  align-items: center;
  gap: 4px;
  height: 20px;
  padding: 0 3px 0 5px;
  border: 1px solid var(--line);
  background: #f1f3f6;
}

.group-field .caret {
  width: 7px;
  height: 4px;
  color: #000;
}

.pin {
  width: 8px;
  height: 8px;
  margin: -8px 0 0 3px;
}

/* grid */
.grid {
  width: 100%;
  table-layout: fixed;
  border-collapse: separate;
  border-spacing: 0;
  color: #000;
}

.c-ind {
  width: 14px;
}

.c-box {
  width: 21px;
}

.c-desc {
  width: 139px;
}

.c-date {
  width: 75px;
}

.c-code {
  width: 76px;
}

.grid th {
  height: 21px;
  padding: 0 3px;
  text-align: left;
  font-weight: normal;
  white-space: nowrap;
  color: var(--text);
  border: 1px solid var(--line);
  border-width: 1px 1px 1px 0;
  background: linear-gradient(#f6f7f9, #eaedf1);
}

.grid th:last-child {
  border-right: 0;
}

.grid .mark {
  text-align: center;
  border-right-width: 2px;
}

.sort {
  width: 7px;
  height: 4px;
  margin-left: 1px;
  vertical-align: 2px;
  transform: rotate(180deg);
}

.grid td {
  height: 21px;
  padding: 0 3px;
  border: 1px solid #d5dae2;
  border-width: 0 1px 1px 0;
}

.grid td:last-child,
.grid .ind + td {
  border: 0;
  background: #fff;
}

.grid .ind + td {
  border-right: 1px solid #d5dae2;
}

.grid .ind {
  padding: 0 4px;
  border-color: var(--line);
  background: #f1f3f6;
}

.ind svg {
  display: block;
  width: 4px;
  height: 8px;
}

.grid .group-row td + td {
  font-weight: bold;
  color: var(--text);
  padding-left: 7px;
  border: 0;
}

.group-row + tr .check,
.group-row + tr .check ~ td:not(:last-child) {
  box-shadow: 0 -1px #d5dae2;
}

.chevron {
  width: 8px;
  height: 6px;
  margin-right: 8px;
}

.odd td {
  background: #eff7ff;
}

.odd .focus {
  background: #ececee;
}

.grid .check {
  padding: 0 4px;
  border-right: 2px solid var(--line);
}

.check input {
  appearance: none;
  display: block;
  width: 13px;
  height: 13px;
  margin: 0;
  border: 1px solid #a1a8b2;
  background: #e2e2e2;
  box-shadow: inset 0 0 0 1px #fff, inset 0 0 0 2px #bbb;
}

.num {
  text-align: right;
}

/* record window */
.dialog {
  position: absolute;
  left: 197px;
  top: 329px;
  width: 526px;
  border: 3px solid #8c9198;
  padding: 1px;
  background: var(--bar);
}

.dialog-title {
  display: flex;
  align-items: center;
  gap: 11px;
  height: 22px;
  padding: 0 4px 0 3px;
  border-bottom: 1px solid #9a9da2;
  background: #ced4dc;
  color: #4a4d52;
}

.dialog-title span {
  flex: 1;
}

.dialog-title .maximize {
  width: 9px;
  height: 7px;
  border: 2px solid #5f646c;
}

.dialog-body {
  margin: 4px 4px 0;
  padding: 3px 2px 0 3px;
  background: #fff;
}

.page-tab {
  position: relative;
  display: block;
  height: 22px;
  padding: 0 15px;
  border: 1px solid #9a9a9a;
  border-bottom: 0;
  border-radius: 5px 5px 0 0;
  background: #fff;
}

.page {
  height: 214px;
  margin-top: -1px;
  padding: 15px 21px;
  border: 1px solid #9a9a9a;
}

.field {
  margin-bottom: 11px;
}

.field label {
  display: block;
  height: 13px;
  font-weight: bold;
}

.field .optional {
  font-weight: normal;
}

.field input {
  display: block;
  width: 100%;
  height: 20px;
  padding: 0 2px;
  border: 1px solid #767676;
  border-radius: 0;
  outline: 0;
  background: #fff;
  color: #000;
}

.desc-box {
  width: 401px;
}

.field .desc-box input {
  border-color: #0b78d0;
}

.desc-box input::selection {
  background: #0b78d0;
  color: #fff;
}

.lookup {
  display: flex;
  align-items: center;
  gap: 4px;
  width: 401px;
}

.lookup .code {
  flex: none;
  width: 70px;
}

.browse {
  flex: none;
  width: 20px;
  height: 19px;
  border: 1px solid #adadad;
  background: #e1e1e1;
}

.dates {
  display: flex;
  gap: 103px;
}

.date {
  display: flex;
  width: 149px;
}

.date button {
  flex: none;
  display: flex;
  align-items: center;
  justify-content: center;
  gap: 2px;
  width: 34px;
  border: 1px solid #767676;
  border-left: 0;
}

.date .notes {
  width: 12px;
  height: 12px;
}

.date .caret {
  width: 7px;
  height: 4px;
  color: #4a6592;
}

.dialog-actions {
  display: flex;
  justify-content: flex-end;
  gap: 8px;
  padding: 7px 6px 9px;
}

.dialog-actions button {
  width: 73px;
  height: 22px;
  border: 1px solid #adadad;
  box-shadow: inset 0 0 0 1px #e1e1e1;
  font-family: "Liberation Sans", Arial, sans-serif;
  font-size: 12px;
}

.dialog-actions .primary {
  border-color: #bbb;
  box-shadow: inset 0 0 0 2px #ccc;
  color: #3c4c70;
}
```
